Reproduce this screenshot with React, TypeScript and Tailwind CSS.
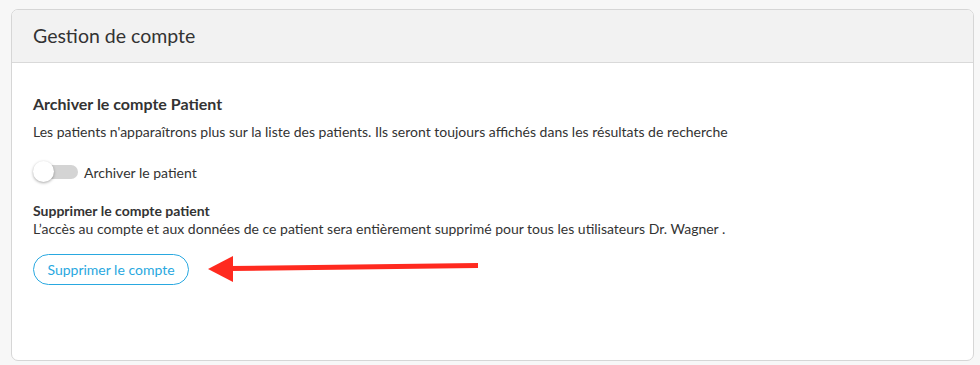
import React from "react";

export default function App() {
  return (
    <div className="w-[980px] h-[365px] bg-[#f7f7f7] pt-[9px] pl-[11px] relative" style={{ fontFamily: "Lato, 'Noto Sans', sans-serif" }}>
      <div className="w-[963px] h-[352px] bg-white border border-[#d6d6d6] rounded-[7px] overflow-hidden flex flex-col">
        <div className="h-[53px] bg-[#f2f2f2] border-b border-[#d9d9d9] flex items-center pl-[21px] text-[19.5px] text-[#333]">
          Gestion de compte
        </div>
        <div className="pl-[21px] pt-[31px] text-[#333]">
          <div className="text-[16px] font-bold leading-[20px] text-[#333]">Archiver le compte Patient</div>
          <div className="text-[14px] leading-[18px] mt-[9px]">
            Les patients n'apparaîtrons plus sur la liste des patients. Ils seront toujours affichés dans les résultats de recherche
          </div>
          <div className="flex items-center mt-[20px] h-[22px]">
            <div className="relative w-[46px] h-[22px]">
              <div className="absolute left-[5px] top-[4px] w-[40px] h-[14px] rounded-full bg-[#d4d4d4]" />
              <div className="absolute left-0 top-0 w-[21px] h-[21px] rounded-full bg-white shadow-[0_1px_3px_rgba(0,0,0,0.35)]" />
            </div>
            <span className="ml-[5px] text-[14px]">Archiver le patient</span>
          </div>
          <div className="text-[14px] font-bold leading-[18px] mt-[19px]">Supprimer le compte patient</div>
          <div className="text-[14px] leading-[18px]">
            L’accès au compte et aux données de ce patient sera entièrement supprimé pour tous les utilisateurs Dr. Wagner .
          </div>
          <button className="mt-[16px] h-[31px] w-[156px] rounded-full border border-[#29a8e0] text-[#29a8e0] text-[14px] flex items-center justify-center bg-white">
            Supprimer le compte
          </button>
        </div>
      </div>
      <svg className="absolute left-0 top-0" width="980" height="365" viewBox="0 0 980 365">
        <line x1="478" y1="265.5" x2="230" y2="268.5" stroke="#ff2a1f" strokeWidth="5" />
        <polygon points="208,269 233,256 233,282" fill="#ff2a1f" />
      </svg>
    </div>
  );
}
